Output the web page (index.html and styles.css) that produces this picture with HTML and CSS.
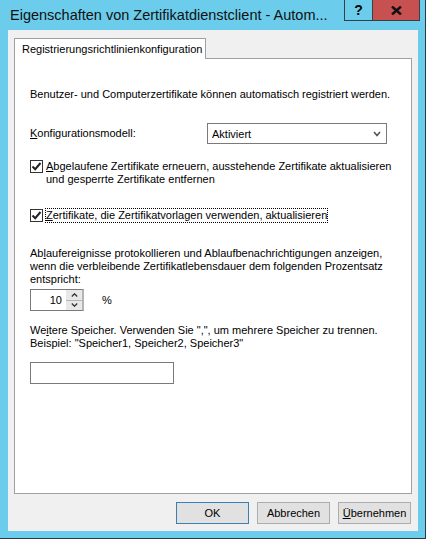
FILE: index.html
```html
<!DOCTYPE html>
<html lang="de">
<head>
    <meta charset="UTF-8">
    <meta name="viewport" content="width=device-width, initial-scale=1.0">
    <title>Eigenschaften von Zertifikatdienstclient</title>
    <link rel="stylesheet" href="styles.css">
</head>
<body>
    <div class="window">
        <div class="titlebar">
            <div class="title">Eigenschaften von Zertifikatdienstclient - Autom...</div>
            <div class="caption-btn help">?</div>
            <div class="caption-btn close">
                <svg width="11" height="9" viewBox="0 0 11 9">
                    <path d="M1 0.5 L10 8.5 M10 0.5 L1 8.5" stroke="#111" stroke-width="2.4" fill="none"/>
                </svg>
            </div>
        </div>
        <div class="client">
            <div class="tabs">
                <div class="tab">Registrierungsrichtlinienkonfiguration</div>
            </div>
            <div class="panel">
                <p class="text">Benutzer- und Computerzertifikate können automatisch registriert werden.</p>

                <div class="field-row">
                    <label class="field-label"><u>K</u>onfigurationsmodell:</label>
                    <div class="select">
                        <span>Aktiviert</span>
                        <svg width="8" height="6" viewBox="0 0 8 6">
                            <path d="M1 1 L4 4.5 L7 1" stroke="#555" stroke-width="1.6" fill="none"/>
                        </svg>
                    </div>
                </div>

                <div class="check check-first">
                    <span class="box">
                        <svg width="11" height="11" viewBox="0 0 11 11">
                            <path d="M1.5 5.5 L4.2 8.2 L9.5 2" stroke="#222" stroke-width="2" fill="none"/>
                        </svg>
                    </span>
                    <span class="check-text"><u>A</u>bgelaufene Zertifikate erneuern, ausstehende Zertifikate aktualisieren und gesperrte Zertifikate entfernen</span>
                </div>

                <div class="check check-second">
                    <span class="box">
                        <svg width="11" height="11" viewBox="0 0 11 11">
                            <path d="M1.5 5.5 L4.2 8.2 L9.5 2" stroke="#222" stroke-width="2" fill="none"/>
                        </svg>
                    </span>
                    <span class="check-text focused"><u>Z</u>ertifikate, die Zertifikatvorlagen verwenden, aktualisieren</span>
                </div>

                <p class="text expiry">Ab<u>l</u>aufereignisse protokollieren und Ablaufbenachrichtigungen anzeigen, wenn die verbleibende Zertifikatlebensdauer dem folgenden Prozentsatz entspricht:</p>

                <div class="spinner-row">
                    <div class="spinner">
                        <div class="spin-value">10</div>
                        <div class="spin-buttons">
                            <div class="spin-btn">
                                <svg width="7" height="4" viewBox="0 0 7 4">
                                    <path d="M0.8 3.5 L3.5 0.8 L6.2 3.5" stroke="#333" stroke-width="1.3" fill="none"/>
                                </svg>
                            </div>
                            <div class="spin-btn">
                                <svg width="7" height="4" viewBox="0 0 7 4">
                                    <path d="M0.8 0.5 L3.5 3.2 L6.2 0.5" stroke="#333" stroke-width="1.3" fill="none"/>
                                </svg>
                            </div>
                        </div>
                    </div>
                    <span class="percent">%</span>
                </div>

                <p class="text stores">We<u>i</u>tere Speicher. Verwenden Sie ",", um mehrere Speicher zu trennen.<br>Beispiel: "Speicher1, Speicher2, Speicher3"</p>

                <div class="textbox"></div>
            </div>
            <div class="buttons">
                <button class="btn default">OK</button>
                <button class="btn">Abbrechen</button>
                <button class="btn"><u>Ü</u>bernehmen</button>
            </div>
        </div>
    </div>
</body>
</html>
```

FILE: styles.css
```css
body {
    margin: 0;
    padding: 0;
    font-family: "Liberation Sans", Arial, sans-serif;
    font-size: 11px;
    color: #000;
}
.window {
    width: 425px;
    height: 538px;
    background: #6bcdeb;
    border-right: 1px solid #2b3a40;
    border-bottom: 1px solid #2b3a40;
    display: flex;
    flex-direction: column;
}
.titlebar {
    height: 30px;
    display: flex;
    align-items: flex-start;
}
.title {
    flex: 1;
    font-size: 14.5px;
    line-height: 30px;
    padding-left: 10px;
    white-space: nowrap;
    overflow: hidden;
    color: #111;
}
.caption-btn {
    height: 20px;
    display: flex;
    justify-content: center;
    align-items: center;
    border: 1px solid #3a3f44;
    border-top: none;
}
.help {
    width: 27px;
    font-weight: bold;
    font-size: 14px;
    border-right: none;
}
.close {
    width: 46px;
    background: #c75050;
    margin-right: 5px;
}
.client {
    flex: 1;
    margin: 0 7px 7px 8px;
    background: #f0f0f0;
    padding: 8px 6px 7px 6px;
    display: flex;
    flex-direction: column;
}
.tabs {
    display: flex;
    height: 20px;
}
.tab {
    width: 192px;
    height: 21px;
    background: #fff;
    border: 1px solid #a0a0a0;
    border-bottom: none;
    padding-left: 7px;
    box-sizing: border-box;
    line-height: 20px;
    position: relative;
    z-index: 1;
}
.panel {
    flex: 1;
    background: #fff;
    border: 1px solid #a0a0a0;
    padding: 29px 15px 0 15px;
}
.text {
    margin: 0;
    line-height: 13px;
}
.field-row {
    margin-top: 22px;
    display: flex;
    align-items: center;
}
.field-label {
    width: 177px;
    line-height: 13px;
}
.select {
    width: 180px;
    height: 21px;
    box-sizing: border-box;
    border: 1px solid #7a7a7a;
    background: #fff;
    display: flex;
    align-items: center;
    justify-content: space-between;
    padding: 0 5px 0 4px;
}
.check {
    display: flex;
    align-items: flex-start;
    line-height: 13px;
}
.check-first {
    margin-top: 16px;
}
.check-second {
    margin-top: 23px;
}
.box {
    width: 13px;
    height: 13px;
    box-sizing: border-box;
    border: 1px solid #333;
    background: #fff;
    display: flex;
    justify-content: center;
    align-items: center;
    flex-shrink: 0;
    margin-right: 3px;
}
.focused {
    outline: 1px dotted #000;
    outline-offset: 0;
}
.expiry {
    margin-top: 25px;
}
.spinner-row {
    margin-top: 3px;
    display: flex;
    align-items: center;
}
.spinner {
    display: flex;
    height: 22px;
    border: 1px solid #7a7a7a;
    border-right: 2px solid #b4b4b4;
    box-sizing: border-box;
    background: #fff;
}
.spin-value {
    width: 35px;
    text-align: right;
    padding-right: 4px;
    box-sizing: border-box;
    line-height: 20px;
}
.spin-buttons {
    width: 16px;
    display: flex;
    flex-direction: column;
    background: #b4b4b4;
    gap: 1px;
}
.spin-btn {
    flex: 1;
    background: #e8e8e8;
    display: flex;
    justify-content: center;
    align-items: center;
}
.percent {
    margin-left: 18px;
}
.stores {
    margin-top: 13px;
}
.textbox {
    margin-top: 12px;
    width: 144px;
    height: 22px;
    box-sizing: border-box;
    border: 1px solid #7a7a7a;
    background: #fff;
}
.buttons {
    display: flex;
    justify-content: flex-end;
    gap: 8px;
    margin-top: 8px;
    padding-right: 1px;
}
.btn {
    width: 73px;
    height: 22px;
    font-family: "Liberation Sans", Arial, sans-serif;
    font-size: 11px;
    background: #e1e1e1;
    border: 1px solid #adadad;
    padding: 0;
    color: #000;
}
.btn.default {
    border-color: #3c7fb1;
}
```
